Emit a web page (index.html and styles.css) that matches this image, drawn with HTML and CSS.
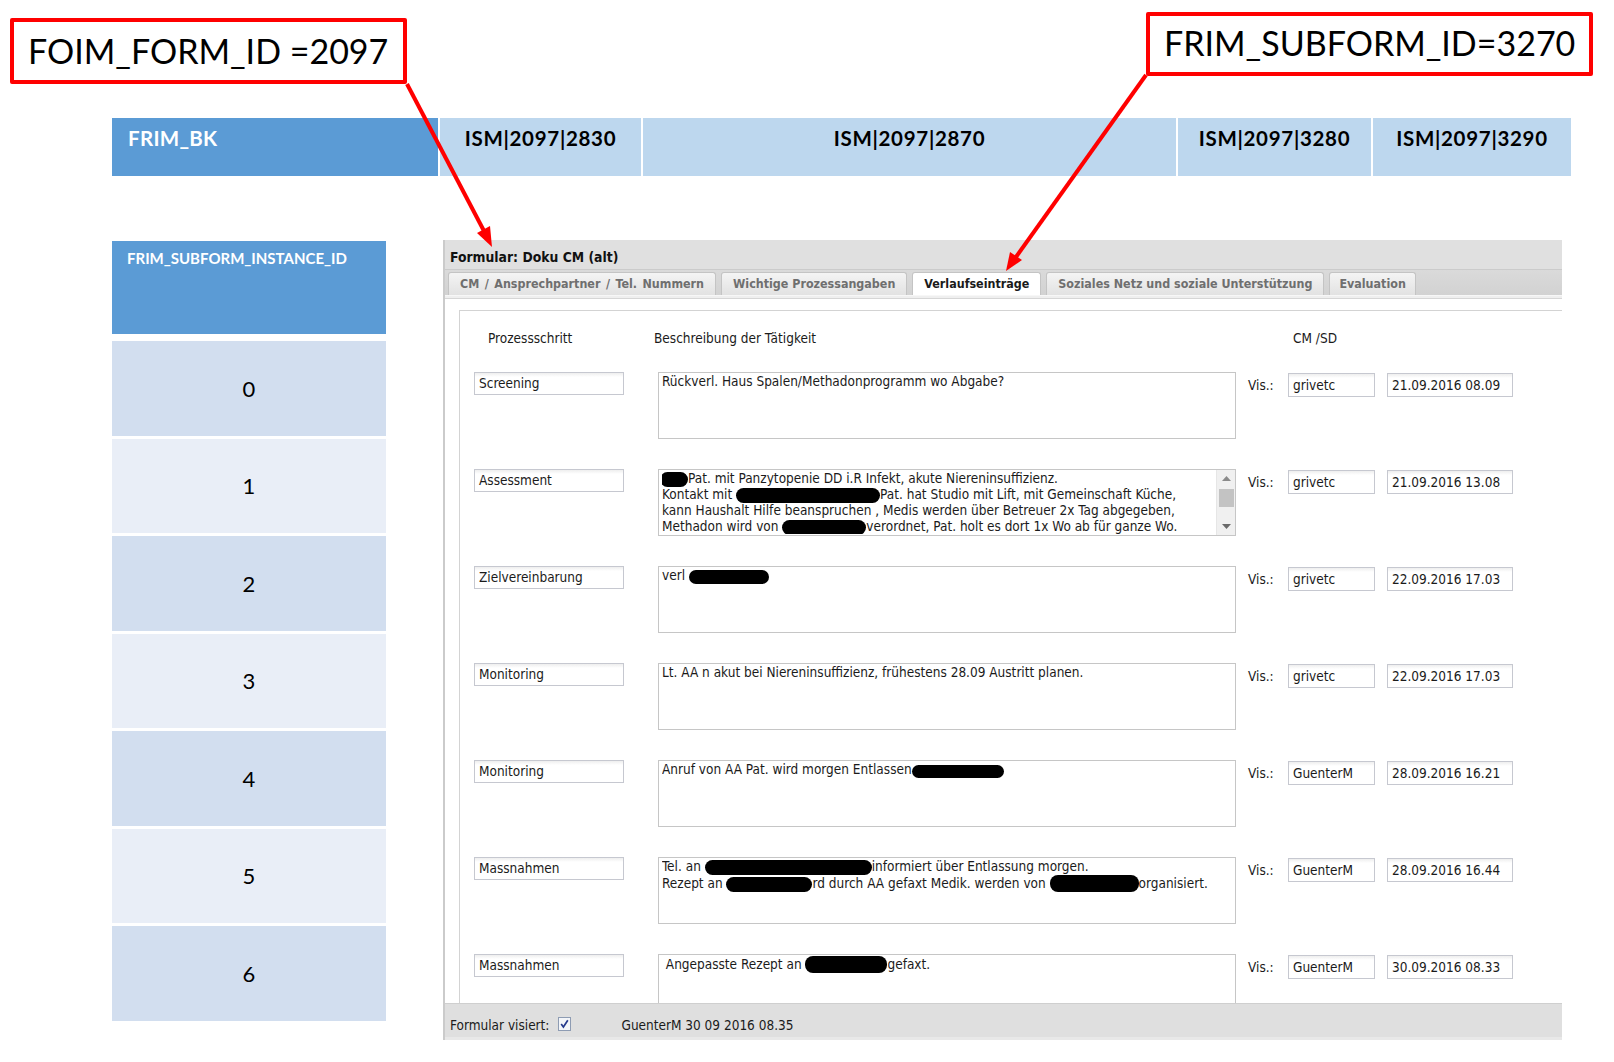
FILE: index.html
```html
<!DOCTYPE html>
<html lang="de">
<head>
<meta charset="utf-8">
<title>Formular Doku CM</title>
<link rel="stylesheet" href="styles.css">
</head>
<body>
<div class="page">
  <div class="annots">
    <div class="note note-form">FOIM_FORM_ID =2097</div>
    <div class="note note-sub">FRIM_SUBFORM_ID=3270</div>
  </div>

  <div class="bk-row">
    <div class="bk-cell bk-key">FRIM_BK</div>
    <div class="bk-cell c2830">ISM|2097|2830</div>
    <div class="bk-cell c2870">ISM|2097|2870</div>
    <div class="bk-cell c3280">ISM|2097|3280</div>
    <div class="bk-cell c3290">ISM|2097|3290</div>
  </div>

  <div class="main">
    <div class="ids">
      <div class="ids-head">FRIM_SUBFORM_INSTANCE_ID</div>
      <div class="ids-row odd">0</div>
      <div class="ids-row even">1</div>
      <div class="ids-row odd">2</div>
      <div class="ids-row even">3</div>
      <div class="ids-row odd">4</div>
      <div class="ids-row even">5</div>
      <div class="ids-row odd">6</div>
    </div>

    <div class="panel">
      <div class="ptitle">Formular: Doku CM (alt)</div>
      <div class="tabs">
        <div class="tab tab-wide">CM / Ansprechpartner / Tel. Nummern</div>
        <div class="tab">Wichtige Prozessangaben</div>
        <div class="tab active">Verlaufseinträge</div>
        <div class="tab">Soziales Netz und soziale Unterstützung</div>
        <div class="tab tab-narrow">Evaluation</div>
      </div>
      <div class="tabline"></div>
      <div class="pbody">
        <div class="content">
          <div class="colheads">
            <div class="ch-step">Prozessschritt</div>
            <div class="ch-desc">Beschreibung der Tätigkeit</div>
            <div class="ch-cm">CM /SD</div>
          </div>

          <div class="entry">
            <div class="field step">Screening</div>
            <div class="desc"><div class="txt">Rückverl. Haus Spalen/Methadonprogramm wo Abgabe?</div></div>
            <div class="vis">Vis.:</div>
            <div class="field user">grivetc</div>
            <div class="field date">21.09.2016 08.09</div>
          </div>

          <div class="entry">
            <div class="field step">Assessment</div>
            <div class="desc">
              <div class="txt"><span class="redact r-lead"></span>Pat. mit Panzytopenie DD i.R Infekt, akute Niereninsuffizienz.<br>Kontakt mit <span class="redact r-144"></span>Pat. hat Studio mit Lift, mit Gemeinschaft Küche,<br>kann Haushalt Hilfe beanspruchen , Medis werden über Betreuer 2x Tag abgegeben,<br>Methadon wird von <span class="redact r-84"></span>verordnet, Pat. holt es dort 1x Wo ab für ganze Wo.</div>
              <div class="sbar">
                <div class="sbtn"><svg width="9" height="5" viewBox="0 0 9 5"><polygon points="0,5 9,5 4.5,0" fill="#8a8a8a"/></svg></div>
                <div class="sthumb"></div>
                <div class="sfill"></div>
                <div class="sbtn"><svg width="9" height="5" viewBox="0 0 9 5"><polygon points="0,0 9,0 4.5,5" fill="#6a6a6a"/></svg></div>
              </div>
            </div>
            <div class="vis">Vis.:</div>
            <div class="field user">grivetc</div>
            <div class="field date">21.09.2016 13.08</div>
          </div>

          <div class="entry">
            <div class="field step">Zielvereinbarung</div>
            <div class="desc"><div class="txt">verl <span class="redact r-80"></span></div></div>
            <div class="vis">Vis.:</div>
            <div class="field user">grivetc</div>
            <div class="field date">22.09.2016 17.03</div>
          </div>

          <div class="entry">
            <div class="field step">Monitoring</div>
            <div class="desc"><div class="txt">Lt. AA n akut bei Niereninsuffizienz, frühestens 28.09 Austritt planen.</div></div>
            <div class="vis">Vis.:</div>
            <div class="field user">grivetc</div>
            <div class="field date">22.09.2016 17.03</div>
          </div>

          <div class="entry">
            <div class="field step">Monitoring</div>
            <div class="desc"><div class="txt">Anruf von AA Pat. wird morgen Entlassen<span class="redact r-92"></span></div></div>
            <div class="vis">Vis.:</div>
            <div class="field user">GuenterM</div>
            <div class="field date">28.09.2016 16.21</div>
          </div>

          <div class="entry">
            <div class="field step">Massnahmen</div>
            <div class="desc"><div class="txt">Tel. an <span class="redact r-167"></span>informiert über Entlassung morgen.<br>Rezept an <span class="redact r-86"></span>rd durch AA gefaxt Medik. werden von <span class="redact r-89"></span>organisiert.</div></div>
            <div class="vis">Vis.:</div>
            <div class="field user">GuenterM</div>
            <div class="field date">28.09.2016 16.44</div>
          </div>

          <div class="entry">
            <div class="field step">Massnahmen</div>
            <div class="desc"><div class="txt">&nbsp;Angepasste Rezept an <span class="redact r-82"></span>gefaxt.</div></div>
            <div class="vis">Vis.:</div>
            <div class="field user">GuenterM</div>
            <div class="field date">30.09.2016 08.33</div>
          </div>
        </div>
      </div>
      <div class="pfoot">
        <span>Formular visiert:</span>
        <svg class="chk" width="13" height="14" viewBox="0 0 13 14"><rect x="0.5" y="0.5" width="12" height="13" fill="#f3f5f9" stroke="#8e9cb3"/><path d="M3.2 6.9 L5.4 9.9 L9.8 3.2" fill="none" stroke="#24398c" stroke-width="1.7"/></svg>
        <span class="vis-by">GuenterM 30 09 2016 08.35</span>
      </div>
    </div>
  </div>

  <svg class="arrows" width="1614" height="1062" viewBox="0 0 1614 1062">
    <line x1="407" y1="84" x2="484" y2="231" stroke="#ff0000" stroke-width="4"/>
    <polygon points="492,247 477,233 490,226" fill="#ff0000"/>
    <line x1="1146" y1="75" x2="1016" y2="257" stroke="#ff0000" stroke-width="4"/>
    <polygon points="1006,271 1010,252 1022,260" fill="#ff0000"/>
  </svg>
</div>
</body>
</html>
```

FILE: styles.css
```css
* { box-sizing: border-box; }
html, body { margin: 0; padding: 0; background: #ffffff; }

.page {
  position: relative;
  width: 1614px;
  height: 1062px;
  overflow: hidden;
  padding-top: 12px;
  font-family: Lato, "Open Sans", sans-serif;
  color: #000;
}

/* annotation boxes */
.annots { display: flex; align-items: flex-start; height: 72px; }
.note {
  border: 4px solid #ff0000;
  border-radius: 2px;
  background: #fff;
  white-space: nowrap;
  font-weight: 400;
  font-size: 34px;
  color: #000;
}
.note-form { margin-left: 10px; margin-top: 6px; width: 397px; height: 66px; padding-left: 14px; line-height: 58px; }
.note-sub { margin-left: auto; margin-right: 21px; width: 447px; height: 64px; padding-left: 14px; line-height: 54px; }

/* FRIM_BK row */
.bk-row { display: flex; gap: 2px; margin: 34px 0 0 112px; width: 1459px; height: 58px; }
.bk-cell {
  background: #bdd7ee;
  font-weight: 700;
  font-size: 20.5px;
  line-height: 24px;
  padding-top: 8px;
  text-align: center;
  letter-spacing: 0.7px;
  color: #000;
}
.bk-key { width: 326px; background: #5b9bd5; color: #fff; text-align: left; padding-left: 16px; letter-spacing: 0.3px; }
.c2830 { width: 201px; }
.c2870 { width: 533px; }
.c3280 { width: 193px; }
.c3290 { width: 198px; }

/* main area */
.main { display: flex; margin: 64px 0 0 112px; }

.ids { width: 274px; margin-top: 1px; display: flex; flex-direction: column; gap: 3px; }
.ids-head {
  height: 93px;
  background: #5b9bd5;
  color: #fff;
  font-weight: 700;
  font-size: 15px;
  padding: 8px 0 0 15px;
  margin-bottom: 4px;
}
.ids-row { height: 94.5px; display: flex; align-items: center; justify-content: center; font-size: 22px; }
.odd { background: #d2deef; }
.even { background: #e9eef7; }

/* form panel */
.panel {
  margin-left: 57px;
  width: 1119px;
  height: 800px;
  display: flex;
  flex-direction: column;
  border-left: 2px solid #cbcbcb;
  font-family: "DejaVu Sans Condensed", "DejaVu Sans", sans-serif;
  font-size: 13.5px;
  color: #1b1b1b;
}
.ptitle {
  height: 29px;
  background: #e0e0e0;
  font-weight: 700;
  font-size: 13.8px;
  padding: 9px 0 0 5px;
  line-height: 17px;
  color: #111;
}
.tabs {
  height: 26px;
  border-top: 1px solid #cbcbcb;
  background: linear-gradient(#dadada, #d2d2d2);
  padding: 2px 0 0 3px;
  display: flex;
  gap: 5px;
}
.tab {
  height: 23px;
  padding: 0 11px;
  border: 1px solid #c4c4c4;
  border-bottom: 0;
  border-radius: 3px 3px 0 0;
  background: linear-gradient(#f4f4f4, #e2e2e2);
  color: #6f6f6f;
  font-weight: 700;
  font-size: 12.4px;
  line-height: 22px;
  white-space: nowrap;
}
.tab-wide { word-spacing: 1.6px; }
.tab-narrow { padding: 0 9px; }
.tab.active { background: #fff; color: #1a1a1a; }
.tabline { height: 4px; background: #efefef; border-top: 1px solid #f7f7f7; border-bottom: 1px solid #d6d6d6; }

.pbody { flex: 1; min-height: 0; overflow: hidden; padding: 11px 0 0 14px; background: #fff; display: flex; }
.content { flex: 1; border-top: 1px solid #d3d3d3; border-left: 1px solid #d3d3d3; padding: 19px 0 0 14px; }

.colheads { display: flex; height: 16px; line-height: 16px; margin-bottom: 26px; }
.ch-step { width: 150px; padding-left: 14px; }
.ch-desc { margin-left: 30px; width: 634px; }
.ch-cm { padding-left: 5px; }

.entry { display: flex; align-items: flex-start; height: 67px; margin-bottom: 30px; }
.field {
  height: 24px;
  border: 1px solid #c6c8d0;
  background: linear-gradient(#eeeeee 0, #ffffff 4px);
  line-height: 22px;
  padding: 0 4px;
  white-space: nowrap;
}
.step { width: 150px; height: 23px; line-height: 21px; }
.desc {
  margin-left: 34px;
  width: 578px;
  height: 67px;
  border: 1px solid #c6c6c6;
  background: #fff;
  padding: 1px 0 1px 3px;
  line-height: 15.6px;
  white-space: nowrap;
  overflow: hidden;
  display: flex;
}
.txt { flex: 1; overflow: hidden; }
.vis { margin-left: 12px; width: 40px; line-height: 24px; margin-top: 1px; }
.user { width: 87px; margin-top: 1px; }
.date { margin-left: 12px; width: 126px; margin-top: 1px; }

.sbar { width: 19px; margin: -1px 0; background: #f0f0f0; border-left: 1px solid #e6e6e6; display: flex; flex-direction: column; align-items: center; }
.sbtn { height: 17px; width: 100%; display: flex; align-items: center; justify-content: center; }
.sthumb { width: 15px; height: 18px; margin-top: 2px; background: #c3c3c3; }
.sfill { flex: 1; }

.redact { display: inline-block; background: #000; height: 15px; border-radius: 8px; vertical-align: -4px; }
.r-lead { width: 28px; margin-left: -2px; }
.r-144 { width: 144px; }
.r-84 { width: 84px; }
.r-80 { width: 80px; height: 14px; }
.r-92 { width: 92px; height: 13px; }
.r-167 { width: 167px; }
.r-86 { width: 86px; }
.r-89 { width: 89px; height: 17px; }
.r-82 { width: 82px; height: 17px; }

.pfoot {
  height: 37px;
  background: #dfdfdf;
  border-top: 1px solid #cfcfcf;
  border-bottom: 3px solid #e8e8e8;
  display: flex;
  align-items: flex-start;
  padding: 13px 0 0 5px;
  line-height: 16px;
}
.chk { margin: 0 0 0 9px; }
.vis-by { margin-left: 50px; }

.arrows { position: absolute; left: 0; top: 0; pointer-events: none; }
```
